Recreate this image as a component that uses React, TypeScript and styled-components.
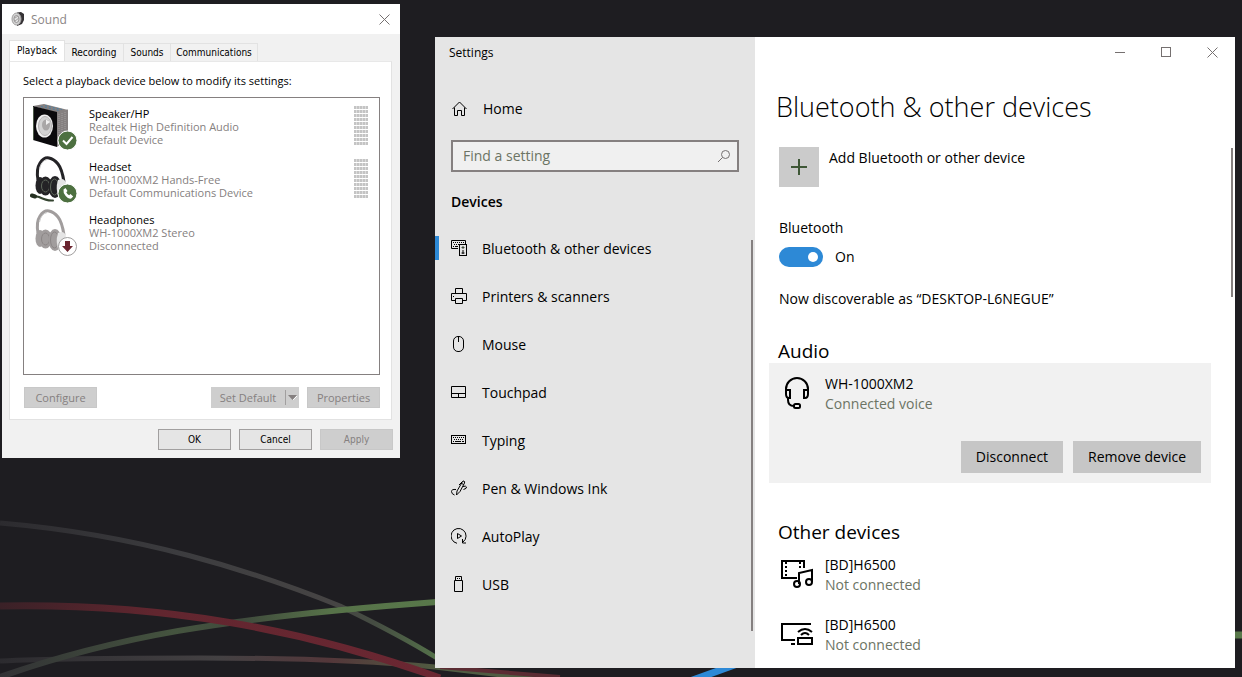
import React from "react";
import styled, { createGlobalStyle } from "styled-components";

const GlobalStyle = createGlobalStyle`
  * { box-sizing: border-box; }
  body {
    margin: 0;
    background: #1e1d21;
    color: #000;
    font-family: "Open Sans", "Noto Sans", sans-serif;
  }
  button, input { font: inherit; color: inherit; }
  button { border: 0; padding: 0; background: none; }
  h1, h2, p, ul { margin: 0; padding: 0; font-weight: 400; }
  ul { list-style: none; }
  svg { display: block; flex: none; }
`;

const Desktop = styled.div`
  position: relative;
  display: flex;
  align-items: flex-start;
  gap: 35px;
  min-height: 100vh;
  padding: 4px 7px 9px 2px;
  overflow: hidden;
`;

const Wallpaper = styled.svg`
  position: absolute;
  inset: 0;
  width: 100%;
  height: 100%;
`;

/* Sound dialog */

const SoundWindow = styled.section`
  position: relative;
  flex: none;
  width: 398px;
  padding-bottom: 8px;
  background: #f1f1f1;
  font-size: 11px;
  line-height: 13px;
`;

const SoundTitleBar = styled.header`
  display: flex;
  align-items: center;
  gap: 5px;
  height: 30px;
  padding: 0 10px 0 9px;
  background: #fff;
  color: #8b8686;
  font-size: 12px;
`;

const SoundClose = styled.button`
  margin-left: auto;
`;

const Tabs = styled.div`
  display: flex;
  align-items: flex-end;
  height: 27px;
  padding-left: 7px;
`;

const Tab = styled.button<{ $active?: boolean; $width: number }>`
  width: ${(p) => p.$width}px;
  height: ${(p) => (p.$active ? 21 : 18)}px;
  padding-bottom: ${(p) => (p.$active ? 2 : 0)}px;
  border: 1px solid #e2e2e2;
  border-bottom: 0;
  border-left-width: ${(p) => (p.$active ? 1 : 0)}px;
  background: ${(p) => (p.$active ? "#fff" : "#f1f1f1")};
  font-family: "DejaVu Sans Condensed", "Open Sans", sans-serif;
  font-size: 10px;
  white-space: nowrap;
`;

const TabPanel = styled.div`
  margin: 0 8px 0 7px;
  padding: 12px 11px 11px 13px;
  border: 1px solid #e2e2e2;
  border-top-color: #e8e8e8;
  background: #fff;
`;

const DeviceList = styled.ul`
  height: 278px;
  margin: 10px 0 12px;
  padding: 4px 10px 0 6px;
  border: 1px solid #858080;
`;

const DeviceItem = styled.li`
  display: flex;
  gap: 11px;
  height: 53px;
`;

const DeviceText = styled.div`
  flex: 1;
  padding-top: 5px;
  color: #858080;
`;

const DeviceName = styled.p`
  color: #000;
`;

const Meter = styled.div`
  width: 14px;
  height: 39px;
  margin: 4px 1px 0 0;
  background:
    repeating-linear-gradient(to bottom, transparent 0 3px, #fff 3px 4px),
    repeating-linear-gradient(to right, #c4c4c4 0 2px, #dcdcdc 2px 3px);
`;

const ButtonRow = styled.div<{ $end?: boolean }>`
  display: flex;
  justify-content: ${(p) => (p.$end ? "flex-end" : "flex-start")};
  gap: 8px;
  padding: ${(p) => (p.$end ? "9px 7px 0" : "0 0 0 1px")};
`;

const DialogButton = styled.button<{ $compact?: boolean }>`
  width: 73px;
  height: 21px;
  border: 1px solid #a19f9f;
  background: #e5e5e5;
  ${(p) =>
    p.$compact
      ? 'font-family: "DejaVu Sans Condensed", "Open Sans", sans-serif; font-size: 10px;'
      : ""}
  &:disabled {
    border-color: #c8c8c8;
    background: #cecece;
    color: #858080;
  }
`;

const SplitButton = styled.div`
  display: flex;
  width: 88px;
  height: 21px;
  margin-left: auto;
  background: #cecece;
  color: #858080;
`;

const SplitMain = styled.button`
  flex: 1;
  color: #858080;
`;

const SplitArrow = styled.button`
  display: grid;
  place-items: center;
  width: 14px;
  height: 15px;
  margin: 3px 0;
  border-left: 1px solid #a19f9f;
`;

/* Settings window */

const SettingsWindow = styled.section`
  position: relative;
  display: flex;
  flex: 1;
  min-width: 0;
  min-height: calc(100vh - 46px);
  margin-top: 33px;
  background: #fff;
  font-size: 14px;
  line-height: 20px;
`;

const Sidebar = styled.aside`
  position: relative;
  flex: none;
  width: 320px;
  background: #e5e5e5;
`;

const AppName = styled.p`
  padding: 1px 14px;
  font-size: 12px;
  line-height: 30px;
`;

const HomeLink = styled.a`
  display: flex;
  align-items: center;
  gap: 15px;
  height: 24px;
  margin: 28px 16px 19px;
  padding-left: 1px;
  color: inherit;
  text-decoration: none;
`;

const SearchBox = styled.label`
  display: flex;
  align-items: center;
  height: 32px;
  margin: 0 16px 18px;
  padding: 0 6px 0 10px;
  border: 2px solid #858080;
  background: #f0f0f0;
`;

const SearchInput = styled.input`
  flex: 1;
  min-width: 0;
  padding: 0;
  border: 0;
  outline: 0;
  background: none;
  &::placeholder { color: #6c7464; opacity: 1; }
`;

const NavHeading = styled.h2`
  margin: 0 16px 10px;
  font-size: 14px;
  font-weight: 600;
  line-height: 24px;
`;

const NavLink = styled.a<{ $active?: boolean }>`
  display: flex;
  align-items: center;
  gap: 15px;
  height: 48px;
  padding-left: 12px;
  color: inherit;
  text-decoration: none;
  &::before {
    content: "";
    width: 4px;
    height: 24px;
    margin: 0 -15px 0 -12px;
    background: ${(p) => (p.$active ? "#2d89d6" : "transparent")};
  }
  svg { margin-left: 12px; }
`;

const NavLabel = styled.span`
  padding-top: 2px;
`;

const ScrollThumb = styled.div<{ $top: number; $length: number }>`
  position: absolute;
  top: ${(p) => p.$top}px;
  right: 2px;
  width: 2px;
  height: ${(p) => p.$length}px;
  background: #858080;
`;

const Content = styled.main`
  flex: 1;
  min-width: 0;
  padding: 0 24px 13px 14px;
`;

const WindowControls = styled.div`
  display: flex;
  justify-content: flex-end;
  margin-right: -24px;
`;

const WindowControl = styled.button`
  display: grid;
  place-items: center;
  width: 46px;
  height: 30px;
`;

const PageTitle = styled.h1`
  margin: 20px 7px 20px;
  font-size: 27px;
  font-weight: 300;
  line-height: 40px;
`;

const AddDevice = styled.button`
  display: flex;
  gap: 10px;
  margin: 0 10px 31px;
  line-height: 22px;
`;

const AddTile = styled.span`
  display: grid;
  place-items: center;
  width: 40px;
  height: 40px;
  background: #cbcbcb;
`;

const Field = styled.p`
  margin: 0 10px;
`;

const ToggleLabel = styled.label`
  display: flex;
  gap: 12px;
  margin: 9px 10px 22px;
`;

const Toggle = styled.input`
  display: grid;
  align-items: center;
  justify-items: end;
  width: 44px;
  height: 20px;
  margin: 0;
  padding: 0 5px;
  border-radius: 10px;
  appearance: none;
  background: #2d89d6;
  &::before {
    content: "";
    width: 10px;
    height: 10px;
    border-radius: 5px;
    background: #fff;
  }
`;

const SectionTitle = styled.h2`
  margin: 30px 9px 0;
  font-size: 19px;
  line-height: 24px;
`;

const DeviceCard = styled.div`
  margin-bottom: 37px;
  padding: 11px 10px 10px;
  background: #f1f1f1;
`;

const PairedDevice = styled.div<{ $listed?: boolean }>`
  display: flex;
  gap: 10px;
  margin: ${(p) => (p.$listed ? "11px 10px 20px" : "0")};
  & + & { margin-top: 0; margin-bottom: 0; }
`;

const DeviceIcon = styled.span`
  display: grid;
  place-items: center;
  width: 36px;
  height: 38px;
`;

const Status = styled.p`
  color: #6c7464;
`;

const Actions = styled.div`
  display: flex;
  justify-content: flex-end;
  gap: 10px;
  margin-top: 27px;
`;

const ActionButton = styled.button`
  height: 32px;
  padding: 0 15px;
  background: #c6c6c6;
`;

/* Icons */

const CloseIcon = ({ color = "#757070" }: { color?: string }) => (
  <svg width="11" height="11" viewBox="0 0 11 11" stroke={color} fill="none">
    <path d="M.5.5l10 10M10.5.5l-10 10" />
  </svg>
);

const SoundIcon = () => (
  <svg width="15" height="16" viewBox="0 0 15 16">
    <path d="M6 1.500L10 1L13 3V9L11 13L6 15Z" fill="#353235" />
    <ellipse cx="5.500" cy="8" rx="4.500" ry="6" fill="#d2d2d2" stroke="#a19f9f" />
    <ellipse cx="5.500" cy="8" rx="2.500" ry="3.500" fill="#e5e5e5" stroke="#959292" />
    <path d="M4 7l3-2M4 10l4-3" stroke="#a19f9f" />
  </svg>
);

const OkBadge = () => (
  <g>
    <circle cx="37.5" cy="38.5" r="9.5" fill="#4d7040" stroke="#fff" />
    <path d="M33 38.5l3.5 3.5 6-7" fill="none" stroke="#fff" strokeWidth="2" />
  </g>
);

const PhoneBadge = () => (
  <g>
    <circle cx="37.5" cy="38.5" r="9.5" fill="#4d7040" stroke="#fff" />
    <path
      d="M33.500 34.500l2-1.500 2 3-1.200 1.300q.8 2 2.800 3l1.400-1.200 2.700 2.400-2 2q-2.700.8-5.500-2.500t-2.200-6.500z"
      fill="#fff"
    />
  </g>
);

const DownBadge = () => (
  <g>
    <circle cx="37.5" cy="38.5" r="9" fill="#fff" stroke="#a19f9f" />
    <path d="M35 33h5v5h3l-5.500 6-5.500-6h3z" fill="#6b2530" />
  </g>
);

const SpeakerIcon = () => (
  <svg width="48" height="48" viewBox="0 0 48 48">
    <path d="M3 4L14 2L38 8L27 11Z" fill="#858080" />
    <path d="M27 10L38 7.500V36L27 45Z" fill="#858080" />
    <path d="M29 12v30M32 11v29M35 10v28" stroke="#a19f9f" strokeDasharray="1 1" />
    <path d="M11 4.500l18 4M15 3.500l17 4" stroke="#4f7f9f" strokeDasharray="2 2" />
    <path d="M3 4L27 10V45L3 38Z" fill="#0b0a0c" />
    <path d="M3.500 5V38" stroke="#4d5a48" />
    <ellipse cx="14.500" cy="24" rx="8.500" ry="11.500" fill="#f1f1f1" />
    <ellipse cx="15" cy="24" rx="6.500" ry="9.500" fill="#d2d2d2" stroke="#b5b3b3" />
    <ellipse cx="16" cy="23" rx="4" ry="5.500" fill="#a9a7a7" />
    <path d="M16 23V17.500l4 2.500z" fill="#f1f1f1" />
    <OkBadge />
  </svg>
);

const HeadphoneShape = ({ dark, shade, mic }: { dark: string; shade: string; mic?: boolean }) => (
  <g>
    <path d="M8 25Q6 14 10 8T19 3T28 9T34 27" fill="none" stroke={dark} strokeWidth="3" />
    <path d="M9.500 14Q11 6 17 4.500" fill="none" stroke="#c8c8c8" />
    <ellipse cx="10" cy="30.500" rx="4.500" ry="8.500" fill={dark} />
    <ellipse cx="15.500" cy="31" rx="6.500" ry="9.500" fill={dark} />
    <ellipse cx="15.500" cy="31" rx="4" ry="6" fill="none" stroke={shade} />
    <ellipse cx="25" cy="32" rx="6.500" ry="11" fill={dark} />
    <ellipse cx="24.500" cy="32" rx="4" ry="8" fill="none" stroke={shade} />
    <path d="M28 25q6-3 8 3l-7 15q-4-9-1-18z" fill="#e5e5e5" />
    {mic && (
      <path
        d="M2 40.500l7 1.500q8 4 14 3.500"
        fill="none"
        stroke="#34432f"
        strokeWidth="2"
        strokeLinecap="round"
      />
    )}
    {mic && <path d="M2 40.500l3 1" stroke="#253021" strokeWidth="4" strokeLinecap="round" />}
  </g>
);

const HeadsetIcon = () => (
  <svg width="48" height="48" viewBox="0 0 48 48">
    <HeadphoneShape dark="#242326" shade="#5d665a" mic />
    <PhoneBadge />
  </svg>
);

const HeadphonesIcon = () => (
  <svg width="48" height="48" viewBox="0 0 48 48">
    <HeadphoneShape dark="#a19d9d" shade="#8b8686" />
    <DownBadge />
  </svg>
);

const Glyph = ({ children }: { children: React.ReactNode }) => (
  <svg width="16" height="16" viewBox="0 0 16 16" fill="none" stroke="#000">
    {children}
  </svg>
);

const HomeIcon = () => (
  <Glyph>
    <path d="M.5 8L7.500 1l7 7M2.500 6.500v8h3v-5h4v5h3v-8" />
  </Glyph>
);

const SearchIcon = () => (
  <svg width="14" height="14" viewBox="0 0 14 14" fill="none" stroke="#757070">
    <circle cx="8.500" cy="5.500" r="4" />
    <path d="M5.500 8.500l-4.500 4.500" />
  </svg>
);

const BluetoothDevicesIcon = () => (
  <Glyph>
    <path d="M7 8.500H.5v-8h14V4" />
    <path d="M2 2.500h11M3 4.500h5" strokeDasharray="1 1" />
    <path d="M2 6.500h1M4 6.500h3" />
    <rect x="8.500" y="4.500" width="7" height="11" fill="#e5e5e5" />
    <path d="M12 6v3M10.500 7.500h3" stroke="#3e4a39" />
    <path d="M12 10v4M10.500 13h3" />
  </Glyph>
);

const PrinterIcon = () => (
  <Glyph>
    <path d="M4.500 6V.5h7V6M4.500 12.500h-4v-7h15v7h-4M4.500 10.500h7v5h-7zM2 8.500h1" />
  </Glyph>
);

const MouseIcon = () => (
  <Glyph>
    <rect x="2.500" y=".5" width="10" height="15" rx="4.500" />
    <path d="M7.500 1v5" />
  </Glyph>
);

const TouchpadIcon = () => (
  <Glyph>
    <path d="M.5 2.500h14v11H.5zM.5 9.500h14M7.500 9.500v4" />
  </Glyph>
);

const KeyboardIcon = () => (
  <Glyph>
    <rect x=".5" y="3.500" width="14" height="8" />
    <path d="M2 5.500h11M3 7.500h10" strokeDasharray="1 1" />
    <path d="M2 9.500h1M4 9.500h6M11 9.500h2" />
  </Glyph>
);

const PenIcon = () => (
  <Glyph>
    <path d="M5.500 15l.5-4L11 2.500Q12 .5 13 1t.500 2L9 11.500l-3.500 3.500zM10 3l2.500 1.500M11.500 1.500L8 5" />
    <path d="M5 9.500Q.5 9 .5 11.500t3 3.500M12 6.500q3-1 3.500.5t-3 2.500" />
  </Glyph>
);

const AutoPlayIcon = () => (
  <Glyph>
    <path d="M6 15.300A7.500 7.500 0 1 1 12 14M6.500 5.500v5l4-2.500zM11.500 11v4h3.500" />
  </Glyph>
);

const UsbIcon = () => (
  <Glyph>
    <path d="M4.500 4V.5h6V4M3.500 4.500h8v11h-8zM6 2.500h1M8 2.500h1" />
  </Glyph>
);

const VoiceHeadsetIcon = () => (
  <svg width="24" height="32" viewBox="0 0 24 32" fill="none" stroke="#000" strokeWidth="2">
    <path d="M1 13v-1a11 11 0 0 1 22 0v1" />
    <path d="M1 12v5q0 4 3 4h1v-8H1M23 12v5q0 4-3 4h-1v-8h4" />
    <path d="M3 20v3q0 6 6 6" />
    <rect x="9" y="27" width="6" height="4" rx="1.500" />
  </svg>
);

const MediaIcon = () => (
  <svg width="32" height="28" viewBox="0 0 32 28" fill="none" stroke="#000" strokeWidth="2">
    <path d="M16 18H1V1h22v7" />
    <path d="M5 2v16M19 2v7" strokeDasharray="2 2" />
    <path d="M18 24V13l13-3v12" />
    <circle cx="16" cy="24" r="3" />
    <circle cx="28" cy="22" r="3" />
  </svg>
);

const CastIcon = () => (
  <svg width="32" height="22" viewBox="0 0 32 22" fill="none" stroke="#000" strokeWidth="2">
    <path d="M14 17H1V1h29M10 21h4" />
    <rect x="17" y="15" width="14" height="6" />
    <path d="M17 9q7-6 14 0M20 12q4-4 8 0" />
  </svg>
);

const soundDevices = [
  { name: "Speaker/HP", model: "Realtek High Definition Audio", status: "Default Device", icon: <SpeakerIcon />, meter: true },
  { name: "Headset", model: "WH-1000XM2 Hands-Free", status: "Default Communications Device", icon: <HeadsetIcon />, meter: true },
  { name: "Headphones", model: "WH-1000XM2 Stereo", status: "Disconnected", icon: <HeadphonesIcon />, meter: false },
];

const navItems = [
  { label: "Bluetooth & other devices", icon: <BluetoothDevicesIcon /> },
  { label: "Printers & scanners", icon: <PrinterIcon /> },
  { label: "Mouse", icon: <MouseIcon /> },
  { label: "Touchpad", icon: <TouchpadIcon /> },
  { label: "Typing", icon: <KeyboardIcon /> },
  { label: "Pen & Windows Ink", icon: <PenIcon /> },
  { label: "AutoPlay", icon: <AutoPlayIcon /> },
  { label: "USB", icon: <UsbIcon /> },
];

const SoundDialog = () => (
  <SoundWindow aria-label="Sound">
    <SoundTitleBar>
      <SoundIcon />
      Sound
      <SoundClose aria-label="Close">
        <CloseIcon />
      </SoundClose>
    </SoundTitleBar>
    <Tabs role="tablist">
      <Tab role="tab" aria-selected $active $width={56}>Playback</Tab>
      <Tab role="tab" $width={59}>Recording</Tab>
      <Tab role="tab" $width={47}>Sounds</Tab>
      <Tab role="tab" $width={87}>Communications</Tab>
    </Tabs>
    <TabPanel role="tabpanel">
      <p>Select a playback device below to modify its settings:</p>
      <DeviceList>
        {soundDevices.map((d) => (
          <DeviceItem key={d.name}>
            {d.icon}
            <DeviceText>
              <DeviceName>{d.name}</DeviceName>
              <p>{d.model}</p>
              <p>{d.status}</p>
            </DeviceText>
            {d.meter && <Meter />}
          </DeviceItem>
        ))}
      </DeviceList>
      <ButtonRow>
        <DialogButton disabled>Configure</DialogButton>
        <SplitButton>
          <SplitMain disabled>Set Default</SplitMain>
          <SplitArrow disabled aria-label="More defaults">
            <svg width="9" height="5" viewBox="0 0 9 5">
              <path d="M5 5L9 1" stroke="#fff" />
              <path d="M0 0h9L4.500 5z" fill="#858080" />
            </svg>
          </SplitArrow>
        </SplitButton>
        <DialogButton disabled>Properties</DialogButton>
      </ButtonRow>
    </TabPanel>
    <ButtonRow $end>
      <DialogButton $compact>OK</DialogButton>
      <DialogButton $compact>Cancel</DialogButton>
      <DialogButton $compact disabled>Apply</DialogButton>
    </ButtonRow>
  </SoundWindow>
);

const Settings = () => (
  <SettingsWindow aria-label="Settings">
    <Sidebar>
      <AppName>Settings</AppName>
      <HomeLink href="#home">
        <HomeIcon />
        Home
      </HomeLink>
      <SearchBox>
        <SearchInput type="text" placeholder="Find a setting" aria-label="Find a setting" />
        <SearchIcon />
      </SearchBox>
      <NavHeading>Devices</NavHeading>
      <nav>
        {navItems.map((item, i) => (
          <NavLink key={item.label} href="#devices" $active={i === 0}>
            {item.icon}
            <NavLabel>{item.label}</NavLabel>
          </NavLink>
        ))}
      </nav>
      <ScrollThumb $top={203} $length={391} />
    </Sidebar>
    <Content>
      <WindowControls>
        <WindowControl aria-label="Minimize">
          <svg width="10" height="1" viewBox="0 0 10 1">
            <path d="M0 .5h10" stroke="#757070" />
          </svg>
        </WindowControl>
        <WindowControl aria-label="Maximize">
          <svg width="10" height="10" viewBox="0 0 10 10">
            <rect x=".5" y=".5" width="9" height="9" fill="none" stroke="#757070" />
          </svg>
        </WindowControl>
        <WindowControl aria-label="Close">
          <CloseIcon />
        </WindowControl>
      </WindowControls>
      <PageTitle>Bluetooth &amp; other devices</PageTitle>
      <AddDevice>
        <AddTile>
          <svg width="16" height="16" viewBox="0 0 16 16" stroke="#3e5736" strokeWidth="2">
            <path d="M8 0v16M0 8h16" />
          </svg>
        </AddTile>
        Add Bluetooth or other device
      </AddDevice>
      <Field>Bluetooth</Field>
      <ToggleLabel>
        <Toggle type="checkbox" role="switch" defaultChecked />
        On
      </ToggleLabel>
      <Field>Now discoverable as “DESKTOP-L6NEGUE”</Field>
      <SectionTitle>Audio</SectionTitle>
      <DeviceCard>
        <PairedDevice>
          <DeviceIcon>
            <VoiceHeadsetIcon />
          </DeviceIcon>
          <div>
            <p>WH-1000XM2</p>
            <Status>Connected voice</Status>
          </div>
        </PairedDevice>
        <Actions>
          <ActionButton>Disconnect</ActionButton>
          <ActionButton>Remove device</ActionButton>
        </Actions>
      </DeviceCard>
      <SectionTitle>Other devices</SectionTitle>
      <PairedDevice $listed>
        <DeviceIcon>
          <MediaIcon />
        </DeviceIcon>
        <div>
          <p>[BD]H6500</p>
          <Status>Not connected</Status>
        </div>
      </PairedDevice>
      <PairedDevice $listed>
        <DeviceIcon>
          <CastIcon />
        </DeviceIcon>
        <div>
          <p>[BD]H6500</p>
          <Status>Not connected</Status>
        </div>
      </PairedDevice>
    </Content>
    <ScrollThumb $top={111} $length={149} />
  </SettingsWindow>
);

export default function App() {
  return (
    <>
      <GlobalStyle />
      <Desktop>
        <Wallpaper viewBox="0 0 1242 677" preserveAspectRatio="xMinYMin slice" fill="none" aria-hidden>
          <defs>
            <linearGradient id="grey" gradientUnits="userSpaceOnUse" x1="0" y1="0" x2="440" y2="0">
              <stop offset="0" stopColor="#2c2b2f" />
              <stop offset=".4" stopColor="#3c3c3f" />
              <stop offset=".75" stopColor="#464444" />
              <stop offset=".85" stopColor="#454c42" />
              <stop offset="1" stopColor="#55734a" />
            </linearGradient>
            <linearGradient id="red" gradientUnits="userSpaceOnUse" x1="0" y1="0" x2="440" y2="0">
              <stop offset="0" stopColor="#3a2127" />
              <stop offset=".35" stopColor="#61262f" />
              <stop offset="1" stopColor="#6b2732" />
            </linearGradient>
            <linearGradient id="green" gradientUnits="userSpaceOnUse" x1="0" y1="0" x2="440" y2="0">
              <stop offset="0" stopColor="#323235" />
              <stop offset=".4" stopColor="#45543f" />
              <stop offset=".55" stopColor="#3f4a3c" />
              <stop offset=".75" stopColor="#577249" />
              <stop offset="1" stopColor="#58784a" />
            </linearGradient>
            <linearGradient id="low" gradientUnits="userSpaceOnUse" x1="0" y1="0" x2="440" y2="0">
              <stop offset="0" stopColor="#2c2b2f" />
              <stop offset=".5" stopColor="#444143" />
              <stop offset=".75" stopColor="#54373a" />
              <stop offset="1" stopColor="#505c42" />
            </linearGradient>
          </defs>
          <path d="M0 661Q60 658 200 658T435 667L560 682" stroke="url(#low)" strokeWidth="5" />
          <path d="M0 523C140 535 250 570 340 606Q400 635 437 658" stroke="url(#grey)" strokeWidth="5" />
          <path d="M0 677C110 638 220 618 437 602" stroke="url(#green)" strokeWidth="6" />
          <path d="M0 606C160 603 300 628 440 678" stroke="url(#red)" strokeWidth="7" />
          <path d="M440 667L560 677" stroke="#5b2c33" strokeWidth="4" />
          <path d="M690 681L740 663" stroke="#2d89d6" strokeWidth="7" />
          <path d="M1230 635H1242" stroke="#58784a" strokeWidth="7" />
        </Wallpaper>
        <SoundDialog />
        <Settings />
      </Desktop>
    </>
  );
}
